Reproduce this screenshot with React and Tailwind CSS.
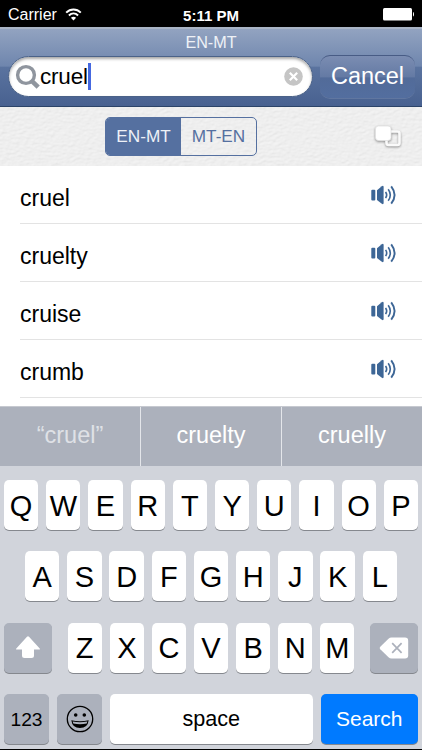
import React, { useState } from "react";
import clsx from "clsx";

const WORDS = ["cruel", "cruelty", "cruise", "crumb"];
const SUGGESTIONS = ["“cruel”", "cruelty", "cruelly"];
const TOP_ROW = "QWERTYUIOP".split("");
const MIDDLE_ROW = "ASDFGHJKL".split("");
const BOTTOM_ROW = "ZXCVBNM".split("");

function StatusBar() {
  return (
    <div className="h-[27px] shrink-0 bg-black text-white grid grid-cols-3 items-center pl-2 pr-2 pt-[3px] leading-none">
      <div className="flex items-center gap-2">
        <span className="text-[16px]">Carrier</span>
        <svg width="17" height="13" viewBox="0 0 17 13" fill="none" stroke="white" strokeWidth="2" className="-mt-[2px]">
          <path d="M1.2 4.6C5.4.5 11.6.5 15.8 4.6" />
          <path d="M3.9 7.4c2.7-2.5 6.5-2.5 9.2 0" />
          <path d="M8.5 12.4 5.9 9.7c1.6-1.3 3.6-1.3 5.2 0z" fill="white" stroke="none" />
        </svg>
      </div>
      <span className="text-[15px] font-bold text-center pl-[0px] whitespace-nowrap">5:11 PM</span>
      <svg width="33" height="14" viewBox="0 0 33 14" className="justify-self-end -mt-[2px] mr-[-1px]">
        <rect x="1" y="1" width="29" height="12.5" rx="1.5" fill="white" />
        <path d="M31 5c1.3.5 1.3 4 0 4.5z" fill="white" />
      </svg>
    </div>
  );
}

function SearchHeader({ query, onClear }) {
  return (
    <header className="h-[80px] shrink-0 border-t-2 border-t-[#a9b4c5] border-b border-b-[#2b4368] bg-[linear-gradient(#92a3c0_0%,#6f86ae_48%,#5a739f_50%,#486190_100%)]">
      <h1 className="h-[27px] pt-[5px] text-center text-[16.2px] leading-[17px] text-[#eef1f6]">EN-MT</h1>
      <div className="flex items-start pl-2 pr-[7px] gap-[7px]">
        <div className="flex items-center w-[305px] h-[41px] rounded-full bg-white border border-[#4b6288] pl-[6px] pr-[9px] shadow-[inset_0_2px_3px_rgba(0,0,0,0.35)]">
          <svg width="25" height="26" viewBox="0 0 25 26" fill="none" stroke="#8f959e" className="shrink-0">
            <circle cx="11" cy="11" r="8.4" strokeWidth="3.4" />
            <path d="m17 17.2 6.2 6" strokeWidth="4.6" />
          </svg>
          <span className="text-[22.5px] leading-none tracking-[-0.2px] text-black pt-[2px]">{query}</span>
          <span className="w-[3px] h-[27px] bg-[#4568e0]" />
          <button onClick={onClear} className="ml-auto">
            <svg width="19" height="19" viewBox="0 0 19 19">
              <circle cx="9.5" cy="9.5" r="9.3" fill="#c5c5c5" />
              <path d="m5.8 5.8 7.4 7.4m0-7.4-7.4 7.4" stroke="white" strokeWidth="2.2" />
            </svg>
          </button>
        </div>
        <button className="flex-1 h-[43px] -mt-[1px] pb-[1px] rounded-[10px] border-t border-t-[#485c85] bg-[linear-gradient(#7b8db2_0%,#647aa4_50%,#526b99_52%,#536e9f_100%)] shadow-[0_1px_0_rgba(255,255,255,0.12)] text-white text-[23.5px] leading-none">
          Cancel
        </button>
      </div>
    </header>
  );
}

// leather grain drawn behind the toolbar
function Leather() {
  return (
    <svg className="absolute inset-0 w-full h-full" aria-hidden="true">
      <filter id="leather" x="0" y="0" width="100%" height="100%">
        <feTurbulence type="fractalNoise" baseFrequency="0.22 0.38" numOctaves="2" seed="8" result="noise" />
        <feDiffuseLighting in="noise" surfaceScale="0.4" lightingColor="#f5f5f5">
          <feDistantLight azimuth="235" elevation="70" />
        </feDiffuseLighting>
      </filter>
      <rect width="100%" height="100%" filter="url(#leather)" />
    </svg>
  );
}

function Toolbar({ direction, setDirection }) {
  return (
    <div className="relative h-[59px] shrink-0 bg-[#e8e8e8]">
      <Leather />
      <div className="relative grid grid-cols-[105px_152px_1fr] pt-[10px]">
        <div className="col-start-2 h-[39px] flex rounded-[5px] border-[1.5px] border-[#5570a0] overflow-hidden">
          {["EN-MT", "MT-EN"].map((d) => (
            <button
              key={d}
              onClick={() => setDirection(d)}
              className={clsx(
                "flex-1 text-[17.2px] leading-none pt-[1px]",
                d === direction ? "bg-[#5570a0] text-[#eef1f7]" : "text-[#5570a0]"
              )}
            >
              {d}
            </button>
          ))}
        </div>
        <svg width="30" height="27" viewBox="0 0 30 27" className="justify-self-end mr-[18px] mt-[7px] drop-shadow-[0_1px_1px_rgba(0,0,0,0.4)]">
          <rect x="12.5" y="7.5" width="13" height="13.5" rx="2" fill="none" stroke="#fafafa" strokeWidth="2.6" />
          <rect x="1.5" y="2" width="15.5" height="14.5" rx="3" fill="#fff" stroke="#e2e2e2" strokeWidth="0.8" />
        </svg>
      </div>
    </div>
  );
}

function SpeakerIcon() {
  return (
    <svg width="26" height="20" viewBox="0 0 26 20" fill="none" stroke="#3d6696">
      <rect x="0.3" y="4.7" width="4" height="10.8" rx="1" fill="#3d6696" stroke="none" />
      <path d="M6 5.2 10.8 1.2Q12.6.2 12.6 2v16q0 1.8-1.8.8L6 14.9z" fill="#3d6696" stroke="none" />
      <path d="M14.6 6.9q2.2 3.1 0 6.2" strokeWidth="1.6" />
      <path d="M17.2 4.2q4.2 5.8 0 11.6" strokeWidth="1.6" />
      <path d="M20.2 1.3q6.8 8.7 0 17.4" strokeWidth="1.9" />
    </svg>
  );
}

function WordRow({ word }) {
  return (
    <li className="h-[58px] ml-5 flex items-center justify-between border-b border-[#e3e3e3] pr-[25px]">
      <span className="text-[23px] leading-none pt-[8px] text-black">{word}</span>
      <SpeakerIcon />
    </li>
  );
}

function Key({ children, className }) {
  return (
    <button
      className={clsx(
        "h-[50px] rounded-[5px] flex items-center justify-center leading-none shadow-[0_1px_0_#85888e]",
        className
      )}
    >
      {children}
    </button>
  );
}

function LetterKeys({ letters }) {
  return letters.map((l) => (
    <Key key={l} className="w-[34.3px] shrink-0 bg-white text-black text-[29px] pt-[2px]">
      {l}
    </Key>
  ));
}

function Keyboard() {
  return (
    <div className="flex-1 bg-[#d1d4db] border-b border-black px-1 pt-[14px] flex flex-col gap-[21.3px]">
      <div className="flex justify-between">
        <LetterKeys letters={TOP_ROW} />
      </div>
      <div className="flex justify-between px-[21.1px]">
        <LetterKeys letters={MIDDLE_ROW} />
      </div>
      <div className="flex justify-between">
        <Key className="w-[47.5px] bg-[#acb1bc]">
          <svg width="26" height="23" viewBox="0 0 26 23" fill="white">
            <path d="M12 .8q1-.9 2 0L24.700 12.600q.7 1-.5 1H19v6q0 2.500-2.500 2.500h-7Q7 22.100 7 19.600v-6H1.800q-1.200 0-.5-1z" />
          </svg>
        </Key>
        <div className="flex gap-[7.8px]">
          <LetterKeys letters={BOTTOM_ROW} />
        </div>
        <Key className="w-[47.5px] bg-[#acb1bc]">
          <svg width="30" height="22" viewBox="0 0 30 22">
            <path d="M9.5 1.700Q10.800.5 12.500.5H26q3.200 0 3.200 3.200v14.600q0 3.200-3.200 3.200H12.500q-1.700 0-3-1.200L1.300 12.300q-1.300-1.300 0-2.600z" fill="white" />
            <path d="m13.200 6.200 9.400 9.600m0-9.600-9.400 9.600" stroke="#acb1bc" strokeWidth="1.7" />
          </svg>
        </Key>
      </div>
      <div className="flex gap-2">
        <Key className="w-[45px] bg-[#acb1bc] text-black text-[19.2px] pt-[2px]">123</Key>
        <Key className="w-[45px] bg-[#acb1bc]">
          <svg width="28" height="28" viewBox="0 0 28 28" fill="none" stroke="black">
            <circle cx="14" cy="14" r="12.700" strokeWidth="1.300" />
            <circle cx="9.700" cy="10" r="1.800" fill="black" stroke="none" />
            <circle cx="18.300" cy="10" r="1.800" fill="black" stroke="none" />
            <path d="M5.300 15.200q8.700 2.200 17.400 0-1 7.800-8.700 7.800t-8.700-7.800z" fill="black" stroke="none" />
            <path d="M6.700 16.600q7.300 1.500 14.600 0l-.6 2q-6.700 1.400-13.400 0z" fill="#acb1bc" stroke="none" />
          </svg>
        </Key>
        <Key className="w-[202.5px] bg-white text-black text-[21.6px] pb-[1px]">space</Key>
        <Key className="flex-1 bg-[#007aff] text-white text-[21px] pb-[1px]">Search</Key>
      </div>
    </div>
  );
}

export default function App() {
  const [query, setQuery] = useState("cruel");
  const [direction, setDirection] = useState("EN-MT");

  return (
    <div className="w-[422px] h-[750px] flex flex-col overflow-hidden bg-white font-['Liberation_Sans',Arial,sans-serif]">
      <StatusBar />
      <SearchHeader query={query} onClear={() => setQuery("")} />
      <Toolbar direction={direction} setDirection={setDirection} />
      <ul className="h-[240px] shrink-0">
        {WORDS.map((w) => (
          <WordRow key={w} word={w} />
        ))}
      </ul>
      <div className="h-[60px] shrink-0 grid grid-cols-[141px_141px_140px] bg-[#acb1bc] border-t border-[#c6c9d0] divide-x divide-[#e4e6ea]">
        {SUGGESTIONS.map((s, i) => (
          <button
            key={s}
            className={clsx("text-[23.5px] leading-none pb-[2px]", i === 0 ? "text-[#dfe1e6]" : "text-white")}
          >
            {s}
          </button>
        ))}
      </div>
      <Keyboard />
    </div>
  );
}
